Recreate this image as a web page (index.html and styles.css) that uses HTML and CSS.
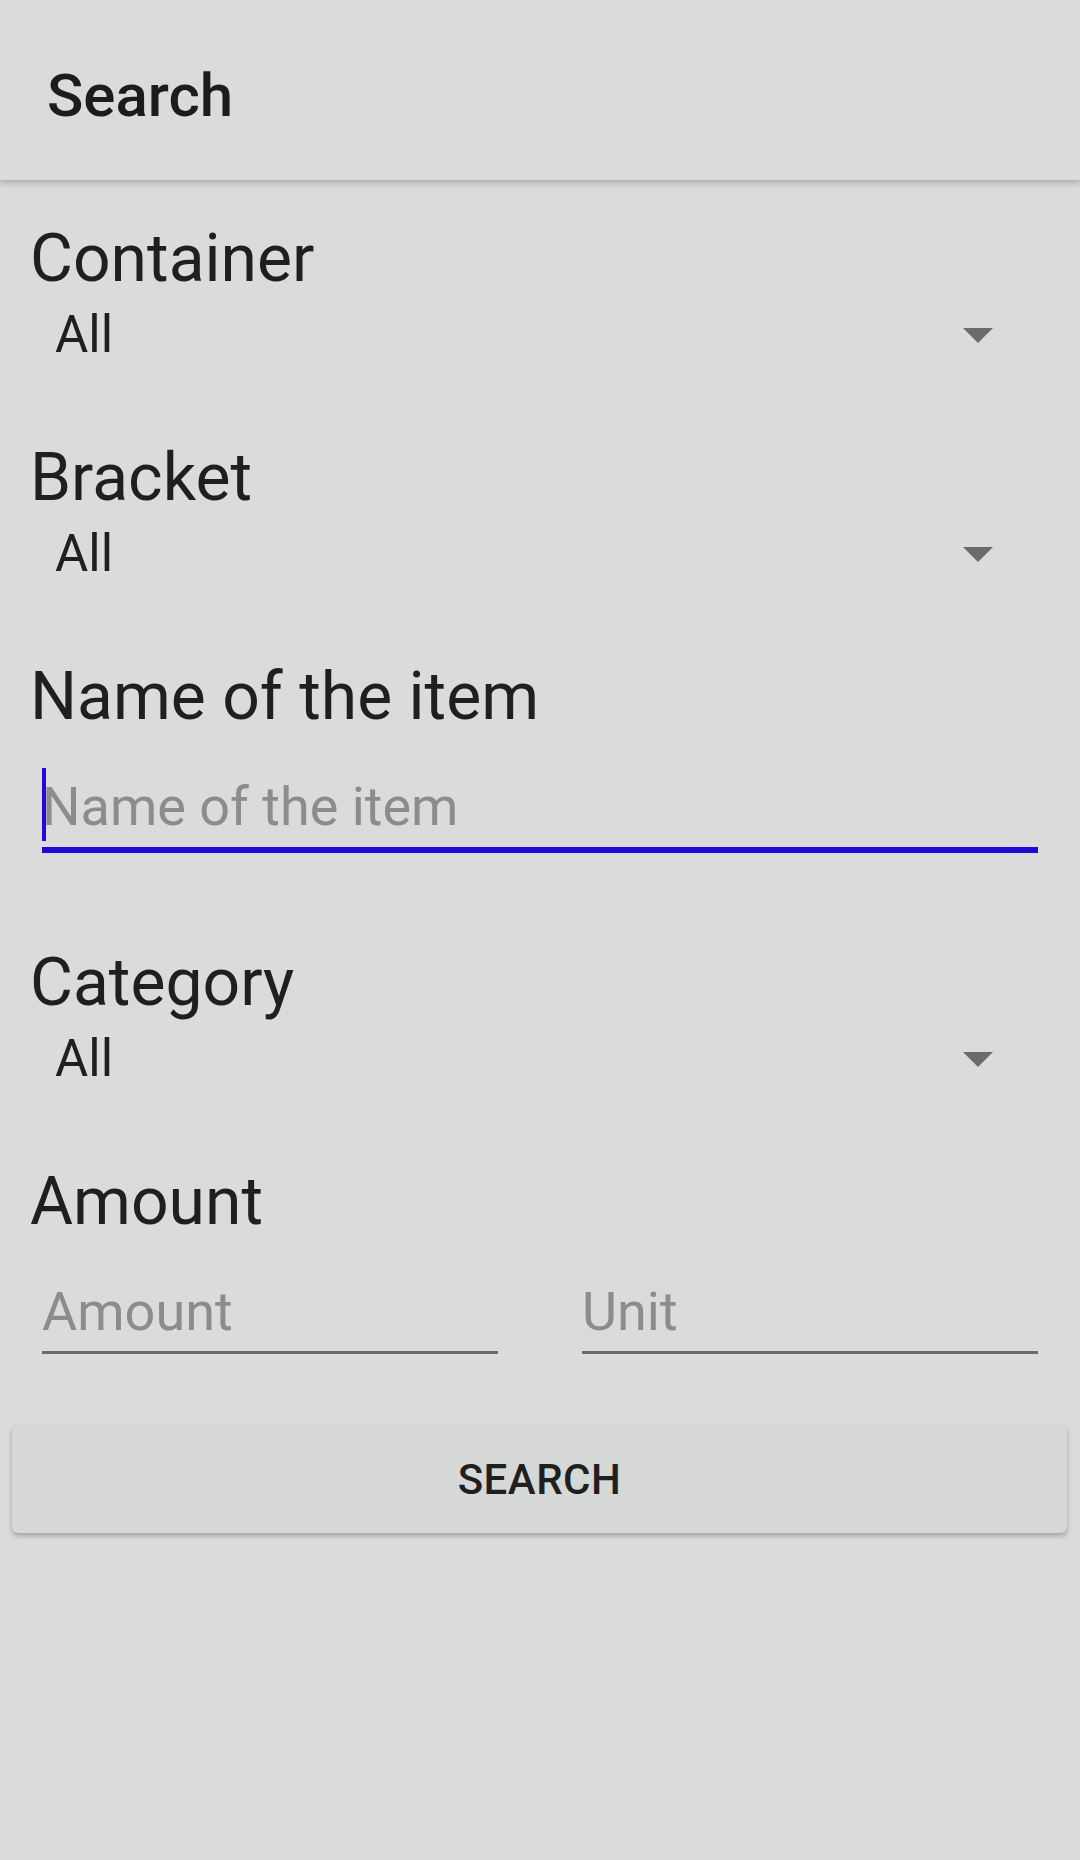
FILE: index.html
```html
<!DOCTYPE html>
<html lang="en">
<head>
<meta charset="utf-8">
<title>Search</title>
<link rel="stylesheet" href="styles.css">
</head>
<body>
<header class="appbar">
  <h1 class="appbar-title">Search</h1>
</header>
<main class="form">
  <section class="field field-first">
    <div class="label">Container</div>
    <div class="spinner"><span class="spinner-value">All</span><span class="spinner-arrow"></span></div>
  </section>
  <section class="field">
    <div class="label">Bracket</div>
    <div class="spinner"><span class="spinner-value">All</span><span class="spinner-arrow"></span></div>
  </section>
  <section class="field">
    <div class="label">Name of the item</div>
    <div class="input-wrap input-wide">
      <span class="cursor"></span>
      <input class="text-input focused" type="text" placeholder="Name of the item">
    </div>
  </section>
  <section class="field field-after-input">
    <div class="label">Category</div>
    <div class="spinner"><span class="spinner-value">All</span><span class="spinner-arrow"></span></div>
  </section>
  <section class="field">
    <div class="label">Amount</div>
    <div class="amount-row">
      <div class="input-wrap"><input class="text-input" type="text" placeholder="Amount"></div>
      <div class="input-wrap"><input class="text-input" type="text" placeholder="Unit"></div>
    </div>
  </section>
  <div class="button-row">
    <button class="search-button" type="button">SEARCH</button>
  </div>
</main>
</body>
</html>
```

FILE: styles.css
```css
html, body {
  margin: 0;
  padding: 0;
}
body {
  width: 1080px;
  height: 1860px;
  overflow: hidden;
  background: #dbdbdb;
  font-family: Roboto, "Noto Sans", sans-serif;
  color: #1f1f1f;
}
.appbar {
  position: relative;
  z-index: 1;
  height: 180px;
  box-sizing: border-box;
  padding: 11px 0 0 47px;
  background: #dbdbdb;
  box-shadow: 0 3px 6px rgba(0, 0, 0, 0.22);
}
.appbar-title {
  margin: 0;
  font-size: 60px;
  line-height: 169px;
  font-weight: 500;
  color: #1c1c1c;
}
.form {
  padding-top: 40px;
}
.field {
  margin-top: 67px;
}
.field-first {
  margin-top: 0;
}
.field-after-input {
  margin-top: 91px;
}
.label {
  padding-left: 30px;
  font-size: 66px;
  line-height: 78px;
  color: #1f1f1f;
}
.spinner {
  display: flex;
  align-items: center;
  justify-content: space-between;
  height: 74px;
  padding: 0 87px 0 55px;
  font-size: 51px;
  line-height: 74px;
  color: #1f1f1f;
}
.spinner-arrow {
  width: 0;
  height: 0;
  border-left: 15px solid transparent;
  border-right: 15px solid transparent;
  border-top: 15px solid #6b6b6b;
}
.input-wrap {
  position: relative;
}
.input-wide {
  margin-left: 42px;
  width: 996px;
}
.text-input {
  display: block;
  width: 100%;
  height: 62px;
  box-sizing: content-box;
  margin: 0;
  padding: 40px 0 8px 0;
  border: 0;
  border-bottom: 3px solid #6b6b6b;
  border-radius: 0;
  background: transparent;
  font-family: Roboto, "Noto Sans", sans-serif;
  font-size: 54px;
  line-height: 62px;
  color: #1f1f1f;
  outline: none;
}
.text-input.focused {
  padding-bottom: 9px;
  border-bottom: 6px solid #2209d8;
}
.text-input::placeholder {
  color: #8c8c8c;
  opacity: 1;
}
.cursor {
  position: absolute;
  left: 0;
  top: 32px;
  width: 4px;
  height: 73px;
  background: #2209d8;
}
.amount-row {
  display: grid;
  grid-template-columns: 456px 456px;
  column-gap: 84px;
  padding-left: 42px;
}
.button-row {
  margin-top: 71px;
  padding: 0 13px 0 12px;
}
.search-button {
  display: block;
  width: 100%;
  height: 108px;
  margin: 0;
  border: 0;
  border-radius: 6px;
  background: #d6d8d8;
  box-shadow: 0 3px 5px rgba(0, 0, 0, 0.25), 0 0 1px rgba(0, 0, 0, 0.12);
  font-family: Roboto, "Noto Sans", sans-serif;
  font-size: 42px;
  font-weight: 500;
  letter-spacing: 0.5px;
  color: #1f1f1f;
}
```
